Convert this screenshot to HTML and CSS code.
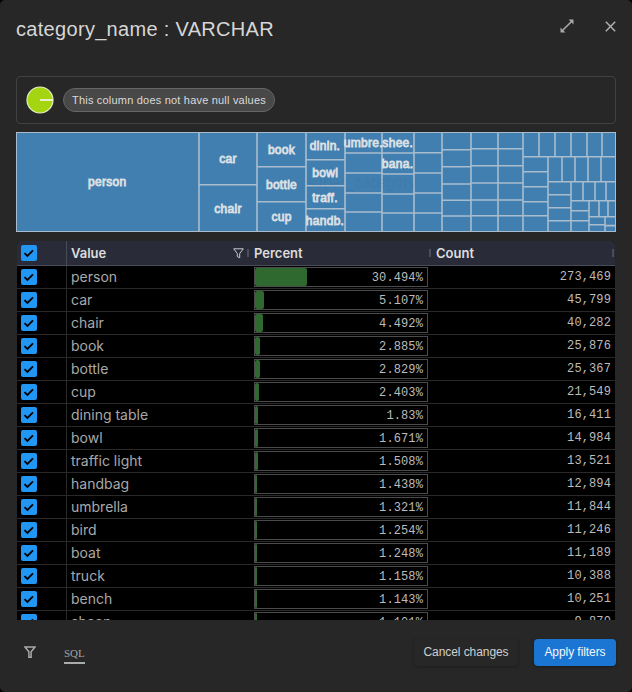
FILE: index.html
```html
<!DOCTYPE html>
<html lang="en">
<head>
<meta charset="utf-8">
<title>category_name : VARCHAR</title>
<link rel="stylesheet" href="styles.css">
</head>
<body>
<main class="dialog">
  <header class="head">
    <h1>category_name : VARCHAR</h1>
    <button class="icon-btn expand" aria-label="Expand"><svg width="14" height="14" viewBox="0 0 14 14"><path d="M8.6 .5H13.5V5.4L11.6 3.5 3.5 11.6 5.4 13.5H.5V8.6L2.4 10.5 10.5 2.4Z" fill="#a9a9a9"/></svg></button>
    <button class="icon-btn" aria-label="Close"><svg width="11" height="11" viewBox="0 0 11 11"><path d="M.8.8l9.4 9.4M10.2.8L.8 10.2" stroke="#b4b4b4" stroke-width="1.4"/></svg></button>
  </header>
  <section class="nulls">
    <svg width="28" height="28" viewBox="0 0 28 28"><circle cx="14" cy="14" r="13" fill="#a5d510" stroke="#e4eec4" stroke-width="1.2"/><path d="M14 14H27" stroke="#e8f0c8" stroke-width="1.8"/></svg>
    <span class="chip">This column does not have null values</span>
  </section>
  <svg class="treemap" viewBox="0 0 600 100">
    <rect width="600" height="100" fill="#427fb1"/>
    <g fill="none" stroke="#a9bdce" stroke-width="1.6">
      <rect x=".5" y=".5" width="599" height="99" stroke-width="1"/>
      <path d="M183 0V100M241 0V100M290 0V100M329 0V100M366 0V100M398 0V100M426 0V100M455 0V100M482 0V100M507 0V100"/>
      <path d="M183 52.8H241M241 34.8H290M241 69.8H290M290 27.8H329M290 53.8H329M290 76.8H329"/>
      <path d="M329 21H366M329 41H366M329 61H366M329 80H366M366 21H398M366 42H398M366 62H398M366 81H398M398 20.8H426M398 41H426M398 61H426M398 81H426"/>
      <path d="M426 17.8H455M426 34.8H455M426 52H455M426 68.3H455M426 84H455M455 16.8H507M455 33.8H507M455 51H507M455 68H507M455 83.8H507"/>
      <path d="M507 24.8H600M523 0V24.8M539 0V24.8M555 0V24.8M571 0V24.8M586 0V24.8"/>
      <path d="M532 24.8V100M507 39.8H532M507 54.8H532M507 69.8H532M507 83.8H532M532 49.8H600M546 24.8V49.8M559 24.8V49.8M572 24.8V49.8M585 24.8V49.8"/>
      <path d="M555 49.8V100M532 62.8H555M532 75.8H555M532 88.8H555M555 68.8H600M567 49.8V68.8M579 49.8V68.8M590 49.8V68.8"/>
      <path d="M573 68.8V100M555 78.8H573M555 88.8H573M573 84.8H600M583 68.8V84.8M592 68.8V84.8M589 84.8V100M573 92.8H589M589 93.6H600"/>
    </g>
    <g class="labels">
      <text x="91.3" y="54">person</text><text x="212" y="31">car</text><text x="212" y="81">chair</text>
      <text x="265.5" y="22">book</text><text x="265.5" y="57">bottle</text><text x="265.5" y="89">cup</text>
      <text x="309" y="18">dinin.</text><text x="309.3" y="45">bowl</text><text x="309" y="70">traff.</text><text x="309" y="93">handb.</text>
      <text x="347.3" y="15">umbre.</text><text x="381.8" y="15">shee.</text><text x="381.5" y="36">bana.</text>
    </g>
  </svg>
  <section class="table">
    <div class="row thead">
      <div class="cell check"><span class="box"><svg viewBox="0 0 16 16"><path d="M3.5 8.2L6.4 11 12 5.3"/></svg></span></div>
      <div class="cell value"><span>Value</span><svg class="funnel" width="11" height="11" viewBox="0 0 11 11"><path d="M.7.8H10.3L6.7 5.5V9.8L4.3 8.6V5.5Z" fill="none" stroke="#c8cad0"/></svg><i></i></div>
      <div class="cell percent"><span>Percent</span><i></i></div>
      <div class="cell count"><span>Count</span><i></i></div>
    </div>
    <div id="rows"></div>
  </section>
  <footer class="foot">
    <svg width="12" height="12" viewBox="0 0 12 12"><path d="M1 1H11L7.1 5.8V11.2H4.9V5.8Z" fill="none" stroke="#aaa" stroke-width="1.5"/></svg>
    <span class="sql">SQL</span>
    <button class="btn">Cancel changes</button>
    <button class="btn primary">Apply filters</button>
  </footer>
  <div class="ghost" aria-hidden="true">
    <span class="g1">image_id</span><span class="g2">category_id</span><span class="g3">super_category</span><span class="g4">category_name</span>
  </div>
</main>
<script src="rows.js"></script>
</body>
</html>
```
FILE: styles.css
```css
* { box-sizing: border-box; }
body { margin: 0; background: #000; font-family: "Liberation Sans", Arial, sans-serif; }
.dialog { position: relative; width: 632px; height: 692px; padding: 0 16px; border-radius: 5px; background: #272727; overflow: hidden; }
.head { display: flex; height: 76px; padding-top: 16px; align-items: flex-start; }
h1 { flex: 1; margin: 0; font-size: 20px; line-height: 26px; font-weight: 400; color: #d6d6d6; letter-spacing: .31px; }
.icon-btn { display: flex; padding: 0; border: 0; background: none; margin-top: 5px; }
.expand { margin: 3px 31px 0 0; }
.nulls { display: flex; align-items: center; gap: 9px; height: 48px; padding: 0 9px; border: 1px solid #414141; border-radius: 4px; }
.chip { width: 212px; height: 24px; padding: 0 8px; border: 1px solid #666; border-radius: 12px; background: #484848; color: #dadada; font-size: 11px; line-height: 22px; letter-spacing: .2px; white-space: nowrap; }
.treemap { display: block; width: 600px; height: 100px; margin-top: 8px; }
.labels text { font: 400 12px "Liberation Sans", Arial, sans-serif; fill: #dce0e4; stroke: #dce0e4; stroke-width: .8px; text-anchor: middle; letter-spacing: .3px; }
.table { width: 598px; height: 379px; margin: 9px 0 0 1px; border-radius: 4px 4px 0 0; background: #000; overflow: hidden; font-family: Inter, sans-serif; }
.row { display: grid; grid-template-columns: 50px 182px 182px 184px; height: 23px; border-bottom: 1px solid #292929; font-size: 14px; color: #a9a9a9; }
.thead { height: 25px; background: #292c38; border-bottom: 1px solid #484b58; font-size: 13px; font-weight: 600; color: #dcdcdf; }
.cell { display: flex; align-items: center; min-width: 0; }
.check { padding-left: 4px; border-right: 1px solid #292929; }
.thead .check { border-color: #484b58; }
.box { width: 16px; height: 16px; border-radius: 2px; background: #2196f3; }
.box svg { display: block; width: 16px; height: 16px; fill: none; stroke: #000; stroke-width: 1.8; }
.value { padding-left: 4px; }
.row:not(.thead) .value { padding-bottom: 2px; }
.percent, .thead .count { padding-left: 5px; }
.thead span:not(.box) { flex: 1; }
.thead i { width: 2px; height: 8px; background: #4b4e59; }
.thead .count i { margin-right: 1px; }
.funnel { margin-right: 3px; }
.bar { display: flex; width: 174px; height: 20px; border: 1px solid #4b4b4b; align-items: center; }
.fill { height: 18px; border-radius: 2px; background: #2f6930; }
.row:not(.thead) .percent { align-items: flex-start; padding-top: 1px; }
.num { margin-left: auto; font: 12px "Liberation Mono", monospace; letter-spacing: .12px; color: #bcbcbc; }
.bar .num { padding: 2px 4px 0 0; }
.count .num { padding: 0 4px 1px 0; }
.foot { display: flex; align-items: center; height: 65px; padding: 0 0 1px 8px; }
.sql { margin-left: 28px; margin-top: 4px; width: 21px; border-bottom: 2px solid #aaa; color: #a4a4a4; font: 11px/16px "Liberation Serif", serif; padding-bottom: 1px; }
.btn { height: 27px; margin: 0; padding: 0; width: 104px; border: 0; border-radius: 4px; background: #272727; color: #d0d0d0; font: 12px "Liberation Sans", Arial, sans-serif; letter-spacing: -.07px; box-shadow: 0 1px 3px #1118; }
.btn:first-of-type { margin-left: auto; }
.btn.primary { margin-left: 16px; width: 82px; background: #1b76d3; color: #f2f6fa; }
.ghost { position: absolute; inset: 0; pointer-events: none; font-size: 16px; color: rgba(255, 255, 255, .025); }
.ghost span { position: absolute; left: 306px; }
.g1 { top: 22px; }
.g2 { top: 98px; }
.g3 { top: 174px; color: rgba(0, 0, 0, .06); }
.g4 { top: 250px; }
```
FILE: rows.js
```js
const data = [
  ["person", 30.494, "273,469"], ["car", 5.107, "45,799"], ["chair", 4.492, "40,282"],
  ["book", 2.885, "25,876"], ["bottle", 2.829, "25,367"], ["cup", 2.403, "21,549"],
  ["dining table", 1.83, "16,411"], ["bowl", 1.671, "14,984"], ["traffic light", 1.508, "13,521"],
  ["handbag", 1.438, "12,894"], ["umbrella", 1.321, "11,844"], ["bird", 1.254, "11,246"],
  ["boat", 1.248, "11,189"], ["truck", 1.158, "10,388"], ["bench", 1.143, "10,251"],
  ["sheep", 1.101, "9,870"]
];
document.getElementById("rows").innerHTML = data.map(([name, pct, count]) => `
  <div class="row">
    <div class="cell check"><span class="box"><svg viewBox="0 0 16 16"><path d="M3.5 8.2L6.4 11 12 5.3"/></svg></span></div>
    <div class="cell value">${name}</div>
    <div class="cell percent"><div class="bar"><div class="fill" style="width:${pct}%"></div><span class="num">${pct}%</span></div></div>
    <div class="cell count"><span class="num">${count}</span></div>
  </div>`).join("");
```
